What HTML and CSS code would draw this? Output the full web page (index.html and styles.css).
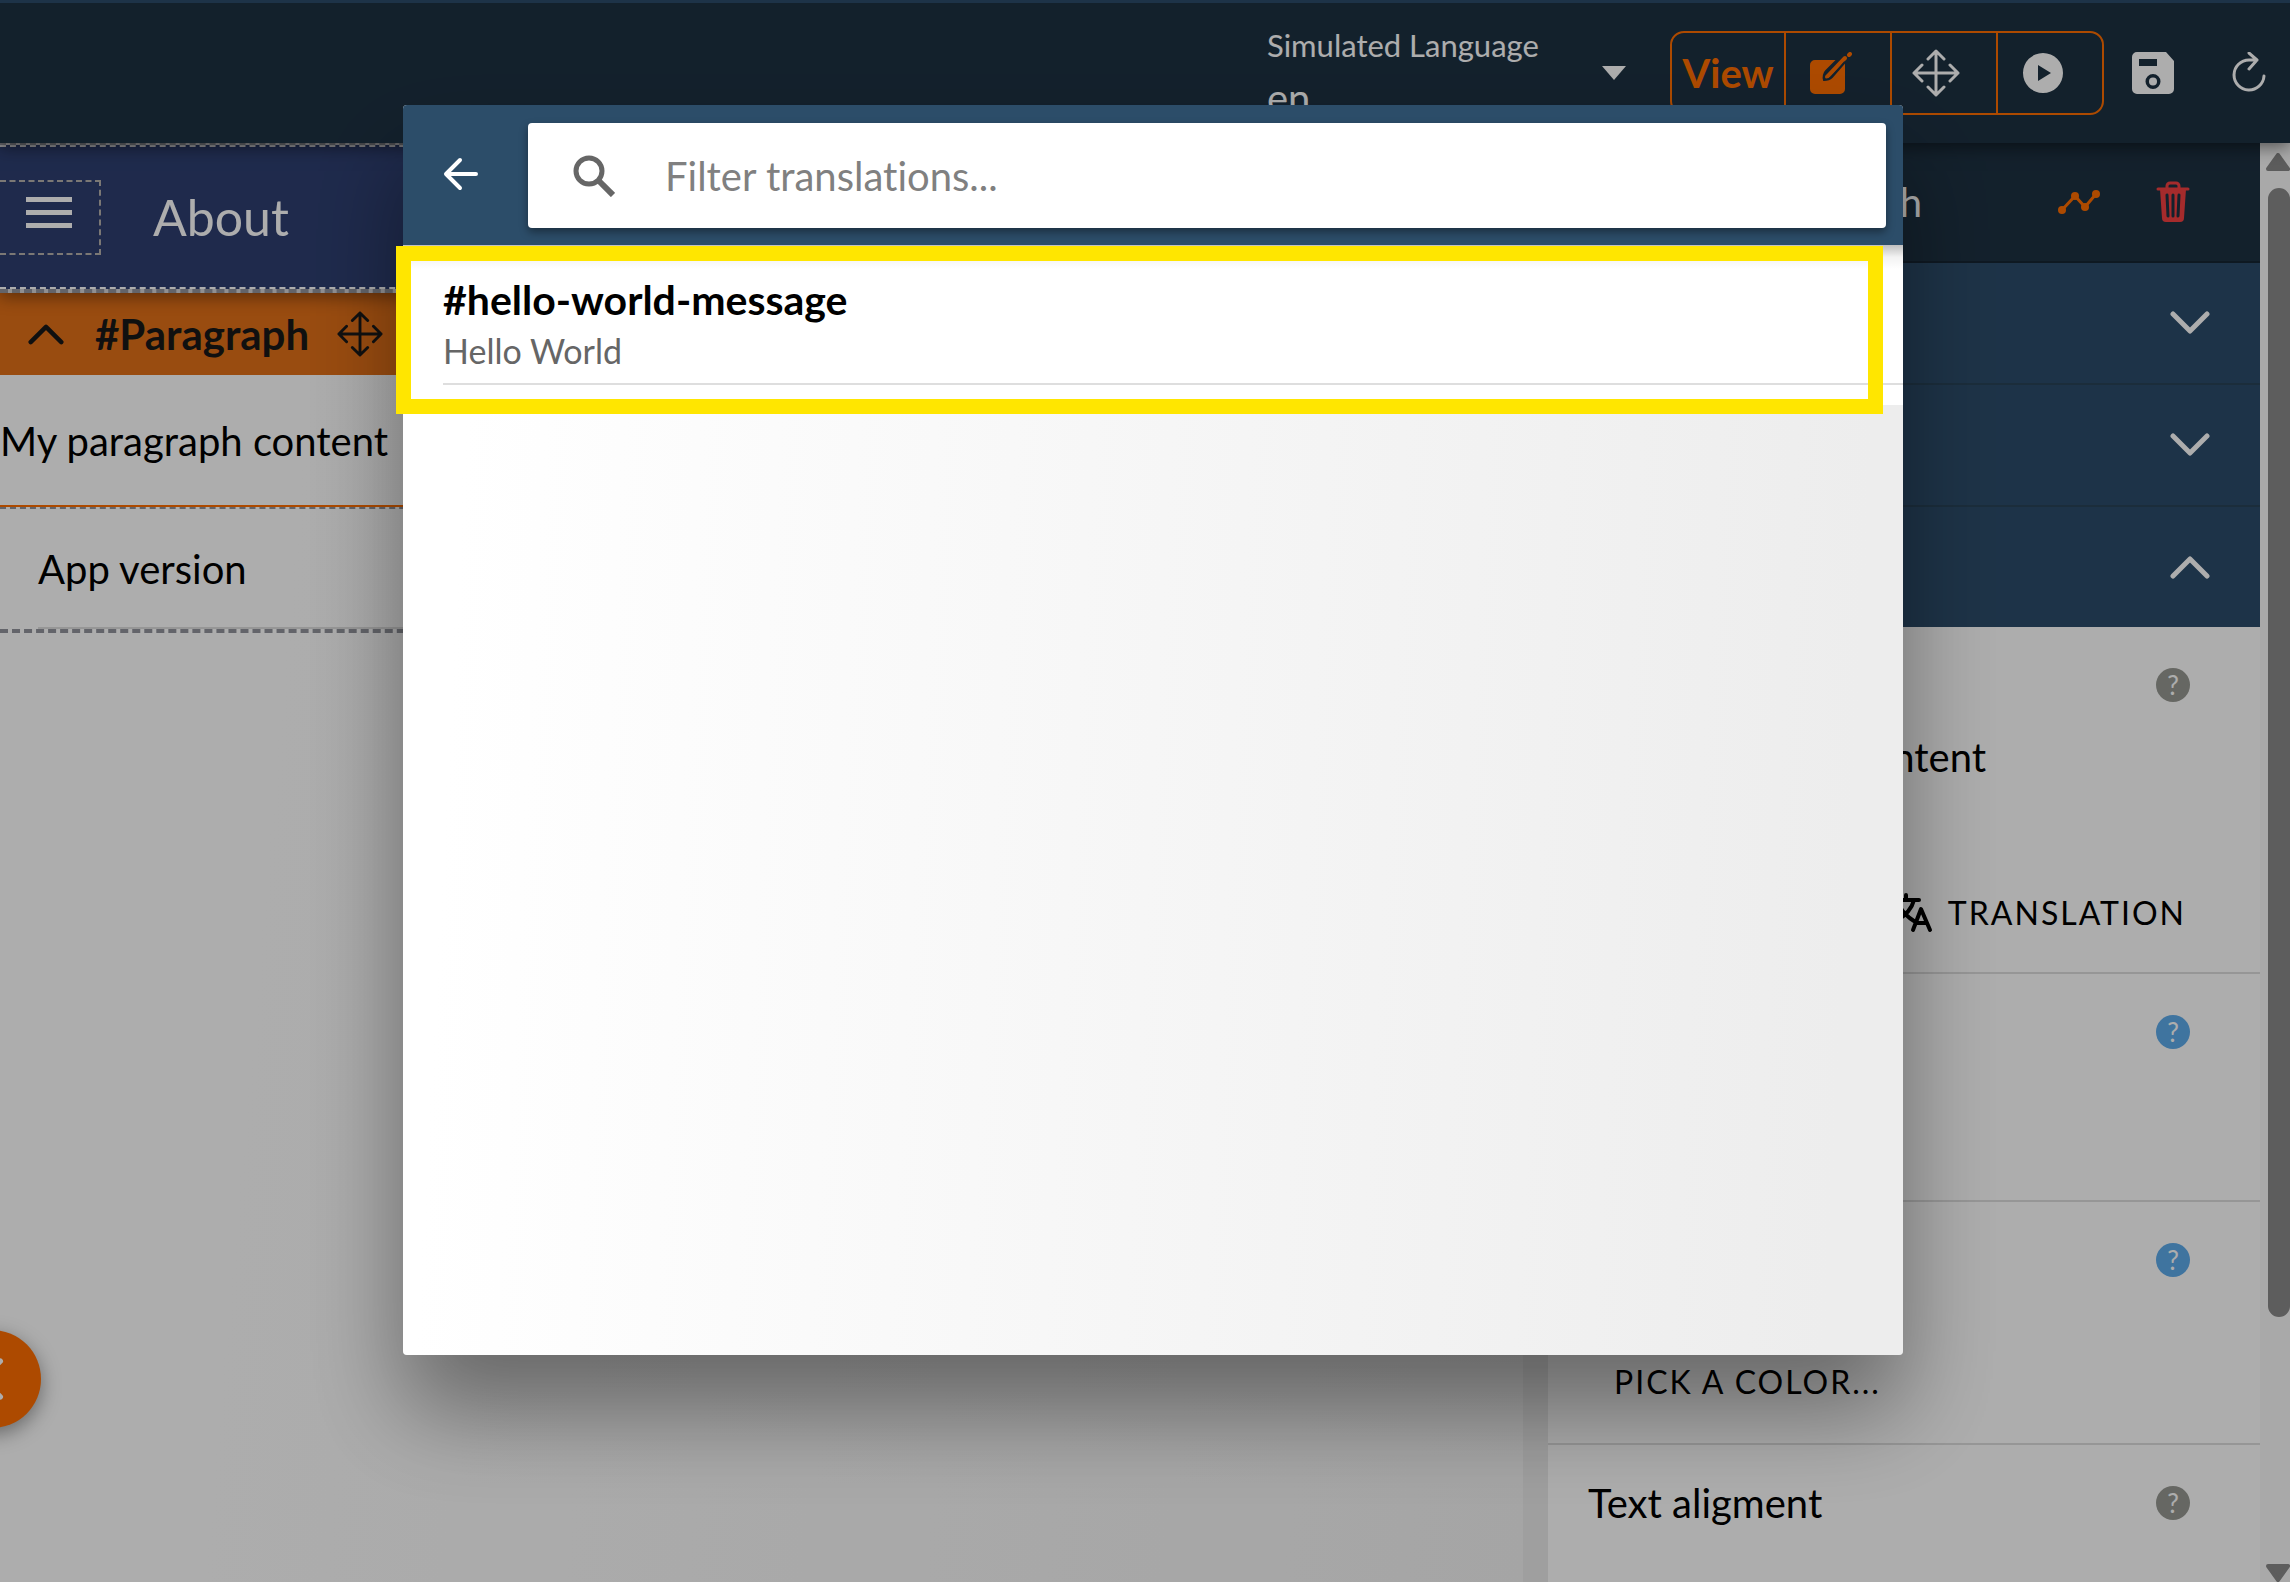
FILE: index.html
```html
<!DOCTYPE html>
<html lang="en">
<head>
  <meta charset="UTF-8">
  <meta name="viewport" content="width=device-width, initial-scale=1.0">
  <title>App Editor</title>
  <link rel="stylesheet" href="styles.css">
</head>
<body>
  <!-- Shared icons -->
  <svg class="hidden">
    <symbol id="icon-move" viewBox="0 0 48 48">
      <path d="M24 2v44M2 24h44M16 10l8-8 8 8M16 38l8 8 8-8M10 16l-8 8 8 8M38 16l8 8-8 8" fill="none" stroke="currentColor" stroke-width="3" stroke-linecap="round" stroke-linejoin="round"/>
    </symbol>
    <symbol id="icon-down" viewBox="0 0 40 40">
      <path d="M3 11l17 17 17-17" fill="none" stroke="currentColor" stroke-width="5" stroke-linecap="round" stroke-linejoin="round"/>
    </symbol>
    <symbol id="icon-up" viewBox="0 0 40 40">
      <path d="M3 29l17-17 17 17" fill="none" stroke="currentColor" stroke-width="5" stroke-linecap="round" stroke-linejoin="round"/>
    </symbol>
  </svg>

  <header class="topbar">
    <div class="language">
      <div class="language-field">
        <label for="language">Simulated Language</label>
        <select id="language">
          <option>en</option>
        </select>
      </div>
      <svg class="caret" viewBox="0 0 24 14"><path d="M0 0h24L12 14z" fill="currentColor"/></svg>
    </div>
    <div class="modes">
      <button class="mode mode-view">View</button>
      <button class="mode active" aria-label="Edit">
        <svg viewBox="0 0 42 42">
          <path d="M5 8h22L16 19c-2 2-3 6-2 9 3 0 6-1 8-3l13-15v27a5 5 0 0 1-5 5H5a5 5 0 0 1-5-5V13a5 5 0 0 1 5-5z" fill="currentColor"/>
          <path d="M17 25L35 6" stroke="currentColor" stroke-width="4" stroke-linecap="round"/>
          <path d="M39 3l1-1" stroke="currentColor" stroke-width="4" stroke-linecap="round"/>
          <path d="M27 8L16 19c-2 2-3 6-2 9 3 0 6-1 8-3l13-15" fill="none" class="edit-line" stroke-width="2"/>
        </svg>
      </button>
      <button class="mode" aria-label="Move"><svg class="icon-large"><use href="#icon-move"/></svg></button>
      <button class="mode" aria-label="Play">
        <svg viewBox="0 0 42 42">
          <path fill-rule="evenodd" d="M21 1a20 20 0 1 1 0 40 20 20 0 0 1 0-40zM16 13v16l13-8z" fill="currentColor"/>
        </svg>
      </button>
    </div>
    <div class="actions">
      <button aria-label="Save">
        <svg viewBox="0 0 42 42">
          <path fill-rule="evenodd" d="M5 0h29l8 9v28a5 5 0 0 1-5 5H5a5 5 0 0 1-5-5V5a5 5 0 0 1 5-5zM7 7v7h18V7zM21 22a7 7 0 1 0 0 15 7 7 0 0 0 0-15z" fill="currentColor"/>
          <circle cx="21" cy="29.500" r="4" fill="currentColor"/>
        </svg>
      </button>
      <button aria-label="Reload">
        <svg viewBox="0 0 42 42">
          <path d="M36 24a15 15 0 1 1-15-16h8M21 1l8 7-8 9" fill="none" stroke="currentColor" stroke-width="3" stroke-linecap="round" stroke-linejoin="round"/>
        </svg>
      </button>
    </div>
  </header>

  <main class="workspace">
    <section class="preview">
      <div class="app-header">
        <div class="app-header-inner">
          <button class="menu-button" aria-label="Menu">
            <span></span><span></span><span></span>
          </button>
          <h1>About</h1>
        </div>
      </div>
      <div class="component">
        <div class="component-bar">
          <svg class="component-up"><use href="#icon-up"/></svg>
          <strong>#Paragraph</strong>
          <svg class="component-move"><use href="#icon-move"/></svg>
        </div>
        <p>My paragraph content</p>
      </div>
      <div class="app-item"><span>App version</span></div>
      <button class="fab" aria-label="Collapse">
        <svg viewBox="0 0 40 40"><path d="M28 3L11 20l17 17" fill="none" stroke="currentColor" stroke-width="5" stroke-linecap="round" stroke-linejoin="round"/></svg>
      </button>
    </section>

    <aside class="sidebar">
      <div class="sidebar-header">
        <h2>Paragraph</h2>
        <button class="events" aria-label="Events">
          <svg viewBox="0 0 42 42">
            <path d="M4 29L17 15l10 11L38 13" fill="none" stroke="currentColor" stroke-width="3"/>
            <circle cx="4" cy="29" r="4" fill="currentColor"/><circle cx="17" cy="15" r="4" fill="currentColor"/>
            <circle cx="27" cy="26" r="4" fill="currentColor"/><circle cx="38" cy="13" r="4" fill="currentColor"/>
          </svg>
        </button>
        <button class="delete" aria-label="Delete">
          <svg viewBox="0 0 42 42">
            <path d="M15 8V5a3 3 0 0 1 3-3h6a3 3 0 0 1 3 3v3M6 8h30" fill="none" stroke="currentColor" stroke-width="3" stroke-linecap="round"/>
            <path d="M8 8h26l-2 29a4 4 0 0 1-4 4H14a4 4 0 0 1-4-4z" fill="currentColor"/>
            <path d="M15 14l1 21M21 14v21M27 14l-1 21" class="trash-line" stroke-width="3" stroke-linecap="round"/>
          </svg>
        </button>
      </div>
      <div class="accordions">
        <button class="accordion">Events<svg><use href="#icon-down"/></svg></button>
        <button class="accordion">Style<svg><use href="#icon-down"/></svg></button>
        <button class="accordion">Properties<svg><use href="#icon-up"/></svg></button>
      </div>

      <div class="property">
        <div class="property-title">
          <label for="content">Content</label>
          <button class="help" aria-label="Help">?</button>
        </div>
        <input id="content" type="text" value="My paragraph content">
        <button class="text-button translation">
          <svg viewBox="0 0 42 42">
            <path d="M2 8h25M14 3v5M22 8c-2 8-9 16-18 21M8 15c4 7 9 11 14 14" fill="none" stroke="currentColor" stroke-width="4" stroke-linecap="round"/>
            <path d="M21 38l8-21 9 21M24 31h11" fill="none" stroke="currentColor" stroke-width="4" stroke-linecap="round" stroke-linejoin="round"/>
          </svg>
          TRANSLATION
        </button>
      </div>
      <div class="property property-short">
        <div class="property-title">
          <span>Header</span>
          <button class="help info" aria-label="Help">?</button>
        </div>
      </div>
      <div class="property property-color">
        <div class="property-title">
          <span>Color</span>
          <button class="help info" aria-label="Help">?</button>
        </div>
        <button class="text-button">PICK A COLOR...</button>
      </div>
      <div class="property">
        <div class="property-title">
          <span>Text aligment</span>
          <button class="help" aria-label="Help">?</button>
        </div>
      </div>
    </aside>

    <div class="scrollbar">
      <svg viewBox="0 0 24 18"><path d="M12 2L22 16H2z" fill="currentColor" stroke="currentColor" stroke-width="4" stroke-linejoin="round"/></svg>
      <div class="thumb"></div>
      <svg viewBox="0 0 24 18"><path d="M12 16L22 2H2z" fill="currentColor" stroke="currentColor" stroke-width="4" stroke-linejoin="round"/></svg>
    </div>
  </main>

  <!-- Translation picker -->
  <div class="backdrop">
    <div class="modal" role="dialog" aria-label="Translations">
      <div class="modal-header">
        <button class="back" aria-label="Back">
          <svg viewBox="0 0 42 42"><path d="M19 5L5 19l14 14M6 19h29" fill="none" stroke="currentColor" stroke-width="4" stroke-linecap="round" stroke-linejoin="round"/></svg>
        </button>
        <div class="search">
          <svg viewBox="0 0 42 42">
            <circle cx="16" cy="16" r="13" fill="none" stroke="currentColor" stroke-width="5"/>
            <path d="M26 26l14 14" stroke="currentColor" stroke-width="6"/>
          </svg>
          <input type="search" aria-label="Filter translations" placeholder="Filter translations...">
        </div>
      </div>
      <ul class="translations">
        <li>
          <h3>#hello-world-message</h3>
          <p>Hello World</p>
        </li>
      </ul>
    </div>
  </div>
</body>
</html>
```
FILE: styles.css
```css
/* General Styles */
* {
  box-sizing: border-box;
}
body {
  margin: 0;
  height: 100vh;
  display: flex;
  flex-direction: column;
  overflow: hidden;
  font-family: Lato, 'Open Sans', sans-serif;
  font-size: 40px;
  line-height: 48px;
  font-variant-ligatures: none;
  color: #000;
  background: #fff;
}
h1, h2, h3, p, ul {
  margin: 0;
  padding: 0;
  font-weight: 400;
}
button, input, select {
  font: inherit;
  font-variant-ligatures: none;
  color: inherit;
  background: none;
  border: none;
  padding: 0;
  margin: 0;
}
button {
  cursor: pointer;
}
svg {
  display: block;
  flex: none;
  width: 42px;
  height: 42px;
}
.hidden {
  display: none;
}

/* Top bar */
.topbar {
  position: relative;
  z-index: 2;
  flex: none;
  display: flex;
  justify-content: flex-end;
  align-items: center;
  height: 143px;
  padding-right: 20px;
  border-top: 3px solid #2c4c6a;
  background: #1d3142;
  color: #fff;
  box-shadow: 0 4px 16px rgba(0, 0, 0, 0.5);
}
.language {
  display: flex;
  align-items: center;
  justify-content: space-between;
  width: 359px;
  margin-right: 44px;
}
.language-field {
  display: flex;
  flex-direction: column;
  gap: 14px;
}
.language label {
  font-size: 31px;
  line-height: 36px;
}
.language select {
  height: 42px;
  line-height: 42px;
  appearance: none;
}
.caret {
  width: 24px;
  height: 14px;
}
.modes {
  display: flex;
  height: 84px;
  border: 2px solid #ff6e00;
  border-radius: 14px;
}
.mode {
  width: 106px;
  padding-left: 24px;
  border-left: 2px solid #ff6e00;
}
.mode-view {
  width: 112px;
  padding: 0;
  border: none;
  font-weight: 700;
  color: #ff6e00;
}
.mode.active {
  color: #ff6e00;
}
.edit-line {
  stroke: #1d3142;
}
.mode .icon-large {
  width: 48px;
  height: 48px;
  margin-left: -4px;
}
.actions {
  display: flex;
  gap: 54px;
  margin-left: 28px;
}

.workspace {
  flex: 1;
  display: flex;
  min-height: 0;
}

/* App preview */
.preview {
  position: relative;
  flex: 1;
  border-right: 25px solid #eaeaea;
  background: linear-gradient(95deg, #fff 20%, #f4f4f4);
}
.app-header {
  position: relative;
  border-top: 2px dashed #92949c;
  border-bottom: 4px dashed #92949c;
  background: #d4d4d8;
  box-shadow: 0 4px 16px rgba(0, 0, 0, 0.4);
}
.app-header-inner {
  display: flex;
  align-items: center;
  gap: 52px;
  height: 144px;
  border-top: 2px dashed #d4d4d8;
  border-bottom: 2px dashed #fff;
  background: #2e3f71;
  color: #fff;
}
.menu-button {
  display: flex;
  flex-direction: column;
  gap: 8px;
  width: 101px;
  height: 75px;
  padding: 15px 26px;
  border: 2px dashed #b5b1ad;
  border-left: none;
}
.menu-button span {
  width: 46px;
  height: 5px;
  background: #fff;
}
.app-header h1 {
  font-size: 50px;
  line-height: 60px;
}
.component {
  border-bottom: 2px solid #ff6e00;
}
.component-bar {
  display: flex;
  align-items: center;
  height: 82px;
  padding-left: 28px;
  background: #e27018;
  color: #191919;
}
.component-bar strong {
  margin: 0 28px 0 31px;
  font-size: 42px;
}
.component-up {
  width: 36px;
  height: 36px;
}
.component-move {
  width: 46px;
  height: 46px;
}
.component p {
  padding: 42px 0 40px;
}
.app-item {
  padding-left: 38px;
  border-top: 2px dashed #92949c;
  border-bottom: 4px dashed #92949c;
}
.app-item span {
  display: block;
  padding: 36px 0 34px;
  border-bottom: 2px solid #dedede;
}
.fab {
  position: absolute;
  left: -57px;
  bottom: 154px;
  display: flex;
  justify-content: center;
  align-items: center;
  width: 98px;
  height: 98px;
  border-radius: 50%;
  background: #ff6e00;
  color: #fff;
  box-shadow: 0 6px 20px rgba(0, 0, 0, 0.4);
}

/* Sidebar */
.sidebar {
  flex: none;
  width: 712px;
  background: #fff;
}
.sidebar-header {
  display: flex;
  align-items: center;
  height: 120px;
  padding: 0 66px 0 40px;
  border-bottom: 2px solid #162533;
  background: #1d3142;
  color: #fff;
}
.sidebar-header h2 {
  width: 334px;
  margin-right: auto;
  font-size: 40px;
  text-align: right;
}
.events {
  color: #ff6e00;
}
.delete {
  margin-left: 52px;
  color: #f44041;
}
.trash-line {
  stroke: #1d3142;
}
.accordion {
  display: flex;
  justify-content: space-between;
  align-items: center;
  width: 100%;
  height: 122px;
  padding: 0 50px 0 40px;
  border-bottom: 2px solid #284358;
  background: #2c4c6a;
  color: #fff;
}
.accordion:last-child {
  height: 120px;
  border-bottom: none;
}
.accordion svg {
  width: 40px;
  height: 40px;
}
.property {
  border-bottom: 2px solid #dedede;
  padding: 34px 70px 35px 40px;
}
.property:last-child {
  border-bottom: none;
}
.property-title {
  display: flex;
  justify-content: space-between;
  align-items: center;
}
.property-short {
  height: 228px;
}
.help {
  width: 34px;
  height: 34px;
  border-radius: 50%;
  background: #979992;
  color: #fff;
  font-size: 26px;
  line-height: 34px;
}
.help.info {
  background: #5eabeb;
}
.property input {
  width: 100%;
  margin: 24px 0 108px;
  padding-left: 10px;
}
.text-button {
  display: flex;
  align-items: center;
  gap: 14px;
  font-size: 32px;
  letter-spacing: 2px;
}
.translation {
  margin-left: auto;
  padding-right: 4px;
}
.property-color .text-button {
  margin: 74px 0 2px 26px;
}
.scrollbar {
  flex: none;
  display: flex;
  flex-direction: column;
  align-items: flex-end;
  width: 30px;
  padding-top: 10px;
  background: #fafafa;
  color: #898989;
}
.scrollbar svg {
  width: 24px;
  height: 18px;
}
.thumb {
  width: 22px;
  height: 79%;
  margin: 17px 0 auto;
  border-radius: 11px;
  background: #898989;
}

/* Modal */
.backdrop {
  position: fixed;
  inset: 0;
  z-index: 10;
  display: flex;
  padding: 105px 387px 227px 403px;
  background: rgba(0, 0, 0, 0.32);
}
.modal {
  flex: 1;
  border-radius: 4px;
  background: linear-gradient(93deg, #fff 5%, #ededed 95%);
  box-shadow: 0 56px 96px rgba(0, 0, 0, 0.4);
}
.modal-header {
  position: relative;
  display: flex;
  gap: 45px;
  height: 140px;
  padding: 18px 17px 17px 38px;
  border-radius: 4px 4px 0 0;
  background: #2c4d69;
  color: #fff;
}
.search {
  flex: 1;
  display: flex;
  align-items: center;
  gap: 50px;
  padding: 0 45px;
  border-radius: 4px;
  background: #fff;
  color: #666;
  box-shadow: 0 4px 8px rgba(0, 0, 0, 0.4);
}
.search input {
  flex: 1;
  outline: none;
}
.search input::placeholder {
  color: #808080;
}
.translations {
  position: relative;
  padding: 16px 0 20px 40px;
  list-style: none;
  background: linear-gradient(rgba(0, 0, 0, 0.25), rgba(0, 0, 0, 0.05) 12px, transparent 24px), #fff;
}
/* Yellow frame round the list */
.translations::after {
  content: '';
  position: absolute;
  inset: 1px 20px -9px -7px;
  border: 15px solid #ffe600;
}
.translations li {
  padding: 15px 0 11px;
  border-bottom: 2px solid #dedede;
}
.translations h3 {
  font-size: 41px;
  font-weight: 700;
}
.translations p {
  margin-top: 6px;
  font-size: 34px;
  line-height: 42px;
  color: #666;
}
```
